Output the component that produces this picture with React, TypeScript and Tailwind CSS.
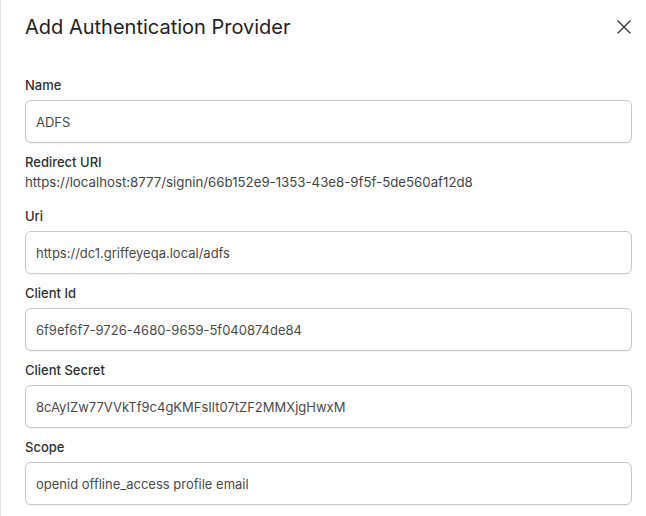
import React from 'react';
import { X } from 'lucide-react';

const fields = [
  { label: 'Uri', value: 'https://dc1.griffeyeqa.local/adfs' },
  { label: 'Client Id', value: '6f9ef6f7-9726-4680-9659-5f040874de84' },
  { label: 'Client Secret', value: '8cAyIZw77VVkTf9c4gKMFsIlt07tZF2MMXjgHwxM' },
  { label: 'Scope', value: 'openid offline_access profile email' },
];

const Field: React.FC<{ label: string; value: string }> = ({ label, value }) => (
  <div className="flex flex-col">
    <label className="h-5 text-[13px] leading-5 font-medium text-[#2f2f2f] mb-[5px]">{label}</label>
    <input
      readOnly
      value={value}
      className="h-[43px] w-full rounded-md border border-[#c9c9c9] bg-white px-[10px] text-[13px] text-[#4a4a4a] shadow-[0_1px_2px_rgba(0,0,0,0.06)] outline-none"
    />
  </div>
);

export default function App() {
  return (
    <div
      className="w-[646px] h-[516px] overflow-hidden bg-white border-l border-[#e2e2e2] pl-6 pr-[14px] pt-[13px]"
      style={{ fontFamily: 'Inter, "Noto Sans", sans-serif' }}
    >
      <div className="flex items-center justify-between h-7">
        <h2 className="text-[20px] leading-7 font-normal text-[#222]">Add Authentication Provider</h2>
        <button className="-mr-1 text-[#333]">
          <X className="w-6 h-6" strokeWidth={1.25} />
        </button>
      </div>

      <div className="mt-[34px] flex flex-col gap-[9px]">
        <Field label="Name" value="ADFS" />
        <div className="flex flex-col mb-[5px]">
          <span className="h-5 text-[13px] leading-5 font-medium text-[#2f2f2f]">Redirect URI</span>
          <span className="h-5 text-[13.25px] leading-5 text-[#444]">
            https://localhost:8777/signin/66b152e9-1353-43e8-9f5f-5de560af12d8
          </span>
        </div>
        {fields.map((f) => (
          <Field key={f.label} label={f.label} value={f.value} />
        ))}
      </div>
    </div>
  );
}
